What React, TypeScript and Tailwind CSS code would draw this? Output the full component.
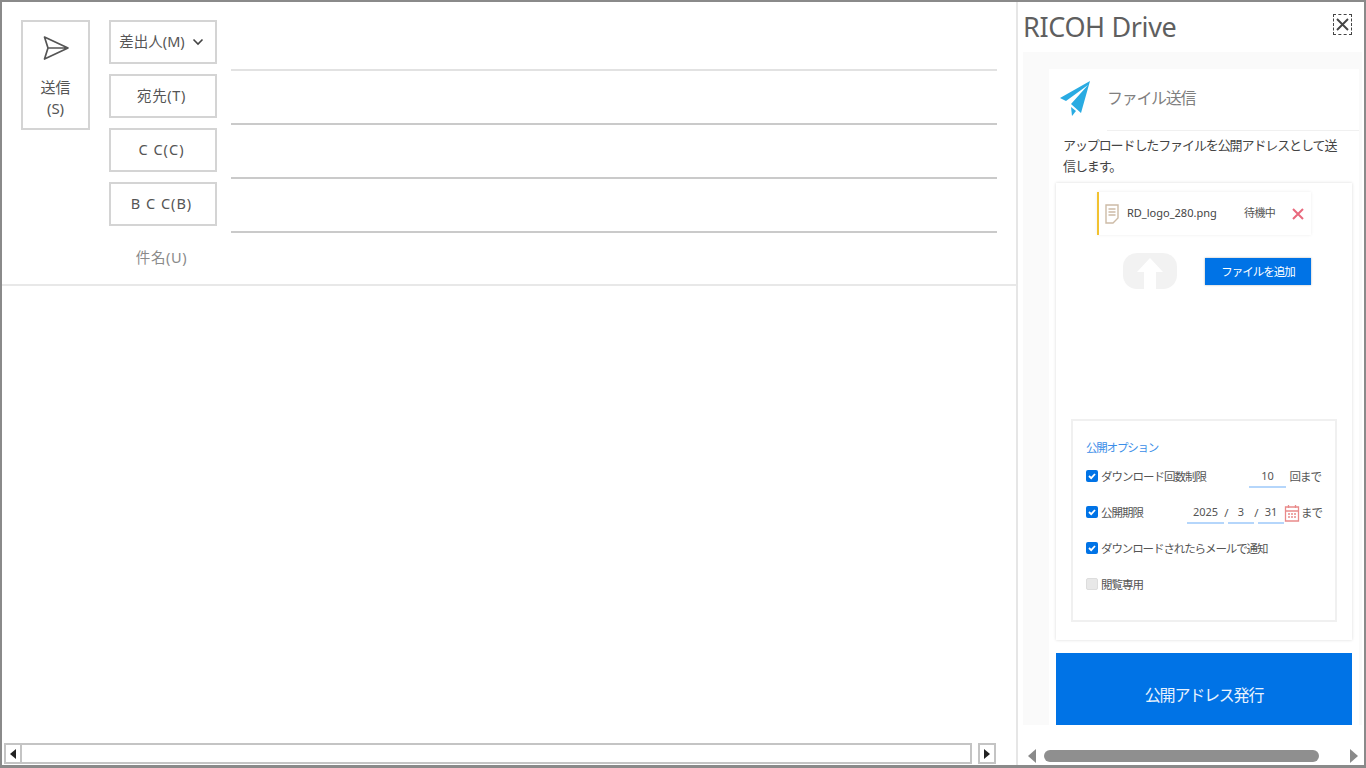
import React from "react";

const font = { fontFamily: '"Noto Sans","Noto Sans CJK JP",sans-serif' };

function FieldBtn({ children, wide }: { children: React.ReactNode; wide?: string }) {
  return (
    <div className={`w-[108px] h-[44px] border-2 border-[#d4d4d4] flex items-center justify-center pr-[3px] text-[14.5px] text-[#555] ${wide ?? ""}`}>
      {children}
    </div>
  );
}

function Row({ label, dropdown, light, wide }: { label: string; dropdown?: boolean; light?: boolean; wide?: string }) {
  return (
    <div className="flex h-[54px] shrink-0">
      <FieldBtn wide={wide}>
        {label}
        {dropdown && (
          <svg width="12" height="8" viewBox="0 0 12 8" className="ml-[7px]" fill="none" stroke="#444" strokeWidth="1.6">
            <path d="M1.5 1.5 6 6l4.5-4.5" />
          </svg>
        )}
      </FieldBtn>
      <div className={`ml-[14px] w-[766px] h-[51px] border-b-2 ${light ? "border-[#e2e2e2]" : "border-[#cacaca]"}`} />
    </div>
  );
}

function Check({ on = true }: { on?: boolean }) {
  return on ? (
    <span className="w-[12px] h-[12px] -mt-[2px] rounded-[2px] bg-[#0073e6] flex items-center justify-center shrink-0">
      <svg width="10" height="10" viewBox="0 0 10 10" fill="none" stroke="#fff" strokeWidth="1.8">
        <path d="M2 5l2.2 2.2L8 3" />
      </svg>
    </span>
  ) : (
    <span className="w-[12px] h-[12px] -mt-[2px] rounded-[2px] bg-[#e8e8e8] border border-[#ddd] shrink-0" />
  );
}

function NumField({ w, v }: { w: string; v: string }) {
  return <span className={`${w} h-[21px] border-b-2 border-[#b5d6fb] flex items-center justify-center text-[11px] tracking-normal text-[#555]`}>{v}</span>;
}

export default function App() {
  return (
    <div style={font} className="w-[1366px] h-[768px] bg-white border-2 border-[#8a8a8a] border-b-[3px] flex overflow-hidden">
      {/* left */}
      <div className="w-[1016px] h-full border-r-2 border-[#e6e6e6] flex flex-col shrink-0">
        <div className="flex pl-[19px] pt-[18px] h-[284px] border-b-2 border-[#e8e8e8] shrink-0">
          <div className="w-[69px] h-[110px] border-2 border-[#d4d4d4] flex flex-col items-center pt-[12px] text-[15px] leading-[21px] text-[#555]">
            <svg width="28" height="28" viewBox="0 0 28 28" fill="none" stroke="#555" strokeWidth="1.7" strokeLinejoin="round">
              <path d="M2.5 3 26 14 2.5 25l3.5-11zM6 14h20" />
            </svg>
            <span className="mt-[15px]">送信</span>
            <span>(S)</span>
          </div>
          <div className="ml-[19px] flex flex-col">
            <Row label="差出人(M)" dropdown light />
            <Row label="宛先(T)" wide="tracking-[0.6px]" />
            <Row label="C C(C)" wide="tracking-[1px]" />
            <Row label="B C C(B)" wide="tracking-[1px]" />
            <div className="w-[108px] h-[44px] flex items-center justify-center pr-[3px] text-[14.5px] tracking-[0.6px] text-[#8a8a8a] shrink-0">件名(U)</div>
          </div>
        </div>
        <div className="flex-1" />
        <div className="h-[21px] mb-[1px] ml-[2px] flex items-stretch">
          <div className="w-[18px] border-2 border-[#c4c4c4] flex items-center justify-center">
            <svg width="6" height="10" viewBox="0 0 6 10"><path d="M6 0v10L0 5z" fill="#222" /></svg>
          </div>
          <div className="w-[950px] border-2 border-l-0 border-[#c4c4c4]" />
          <div className="ml-[6px] w-[18px] border-2 border-[#c4c4c4] flex items-center justify-center">
            <svg width="6" height="10" viewBox="0 0 6 10"><path d="M0 0v10l6-5z" fill="#222" /></svg>
          </div>
        </div>
      </div>

      {/* right */}
      <div className="flex-1 flex flex-col pl-[5px] pr-[2px] min-w-0">
        <div className="h-[50px] flex items-start justify-between shrink-0">
          <span className="text-[27px] tracking-[-0.36px] leading-[49px] text-[#5f5f5f]">RICOH Drive</span>
          <span className="mt-[12px] mr-[10px] w-[19px] h-[21px] border border-dashed border-[#444] flex items-center justify-center">
            <svg width="13" height="13" viewBox="0 0 13 13" fill="none" stroke="#444" strokeWidth="1.9"><path d="M1 1l11 11M12 1 1 12" /></svg>
          </span>
        </div>
        <div className="h-[673px] bg-[#fafafa] pl-[26px] pr-[3px] pt-[17px] overflow-hidden shrink-0">
          <div className="bg-white h-[660px] flex flex-col">
            <div className="h-[62px] flex shrink-0">
              <div className="w-[58px] pl-[11px] pt-[12px] shrink-0">
                <svg width="30" height="36" viewBox="0 0 30 36"><path d="M0 17 30 0 21 32 11 23 28 4 6 20z" fill="#29abe2" /><path d="M11 26l5 4-4 5z" fill="#29abe2" /></svg>
              </div>
              <div className="flex-1 border-b border-[#f0f0f0] text-[16px] tracking-[-1.3px] leading-[58px] text-[#808080]">ファイル送信</div>
            </div>
            <div className="pl-[14px] pr-[2px] pt-[4px] text-[13px] tracking-[-1.1px] leading-[21px] text-[#444] h-[52px] shrink-0 w-[296px]">アップロードしたファイルを公開アドレスとして送信します。</div>
            <div className="ml-[7px] w-[296px] h-[457px] bg-white shadow-[0_0_3px_rgba(0,0,0,0.15)] shrink-0 flex flex-col">
              <div className="ml-[41px] mt-[9px] w-[214px] h-[43px] border-l-2 border-[#f2c230] shadow-[0_0_3px_rgba(0,0,0,0.08)] flex items-center pl-[6px] text-[11px] text-[#444]">
                <svg width="14" height="20" viewBox="0 0 14 20" fill="none" stroke="#cdbba6" strokeWidth="1.4"><path d="M1 1h12v13l-5 5H1zM3.5 5h7M3.5 8h7M3.5 11h7" /></svg>
                <span className="ml-[8px] w-[117px]">RD_logo_280.png</span>
                <span className="text-[#555] tracking-[-0.6px]">待機中</span>
                <svg className="ml-[17px]" width="12" height="12" viewBox="0 0 12 12" fill="none" stroke="#e8697d" strokeWidth="2"><path d="M1 1l10 10M11 1 1 11" /></svg>
              </div>
              <div className="flex mt-[17px] h-[37px] items-start shrink-0">
                <div className="ml-[67px] mt-[1px] w-[54px] h-[36px] rounded-[14px] bg-[#f2f2f2] flex justify-center overflow-hidden">
                  <svg width="28" height="36" viewBox="0 0 28 36"><path d="M14 5 27 19h-7v17H8V19H1z" fill="#fff" /></svg>
                </div>
                <div className="ml-[28px] mt-[6px] w-[106px] h-[27px] bg-[#0073e6] shadow-[0_0_2px_rgba(0,0,0,0.3)] flex items-center justify-center text-[11.5px] tracking-[-1px] text-white">ファイルを追加</div>
              </div>
              <div className="ml-[15px] mt-[130px] w-[266px] h-[203px] border-2 border-[#f0f0f0] pl-[13px] pt-[18px] text-[11.5px] tracking-[-1px] text-[#555] shrink-0">
                <div className="text-[11.5px] tracking-[-1.2px] leading-[18px] text-[#3b8ee8]">公開オプション</div>
                <div className="flex items-center h-[36px] mt-[2px]">
                  <Check />
                  <span className="ml-[3px] flex-1">ダウンロード回数制限</span>
                  <NumField w="w-[37px]" v="10" />
                  <span className="ml-[3px] mr-[14px] w-[32px] text-right whitespace-nowrap">回まで</span>
                </div>
                <div className="flex items-center h-[36px]">
                  <Check />
                  <span className="ml-[3px] flex-1">公開期限</span>
                  <NumField w="w-[37px]" v="2025" />
                  <span className="w-[4px] text-center">/</span>
                  <NumField w="w-[26px]" v="3" />
                  <span className="w-[4px] text-center">/</span>
                  <NumField w="w-[26px]" v="31" />
                  <svg width="16" height="18" viewBox="0 0 15 18" fill="none" stroke="#e98a8a" strokeWidth="1.3">
                    <path d="M1 3h13v14H1zM1 7h13M4 1v3M11 1v3M3.5 10h2M6.5 10h2M9.5 10h2M3.5 13h2M6.5 13h2M9.5 13h2" />
                  </svg>
                  <span className="ml-[1px] mr-[14px] w-[20px] text-right whitespace-nowrap">まで</span>
                </div>
                <div className="flex items-center h-[36px]">
                  <Check />
                  <span className="ml-[3px] tracking-[-1.1px]">ダウンロードされたらメールで通知</span>
                </div>
                <div className="flex items-center h-[36px]">
                  <Check on={false} />
                  <span className="ml-[3px]">閲覧専用</span>
                </div>
              </div>
            </div>
            <div className="ml-[7px] mt-[13px] w-[296px] h-[72px] bg-[#0073e6] flex items-center justify-center text-[16px] tracking-[-1.2px] text-[#e8f2fd] pt-[12px] shrink-0">公開アドレス発行</div>
          </div>
        </div>
        <div className="flex-1 flex items-end pb-[1px] pl-[5px] pr-[4px]">
          <div className="w-full h-[16px] flex items-center">
            <svg width="8" height="14" viewBox="0 0 8 14"><path d="M8 0v14L0 7z" fill="#8a8a8a" /></svg>
            <div className="ml-[8px] w-[275px] h-[12px] rounded-full bg-[#8f8f8f]" />
            <div className="flex-1" />
            <svg width="8" height="14" viewBox="0 0 8 14"><path d="M0 0v14l8-7z" fill="#8a8a8a" /></svg>
          </div>
        </div>
      </div>
    </div>
  );
}
